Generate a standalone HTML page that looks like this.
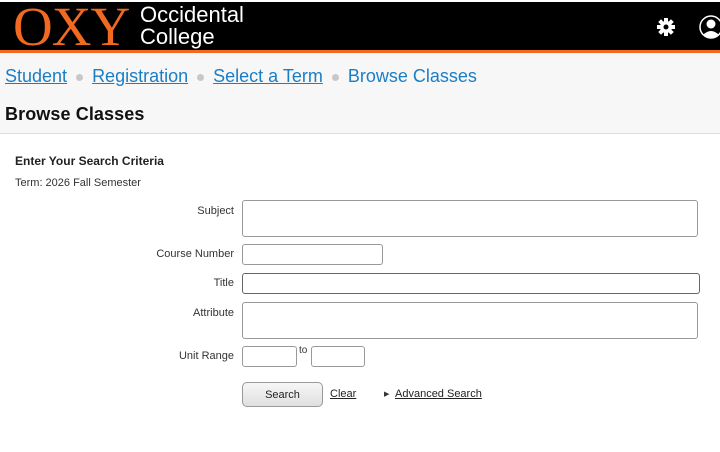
<!DOCTYPE html>
<html><head><style>
body{margin:0;width:720px;height:452px;overflow:hidden;background:#fff;font-family:"Liberation Sans",sans-serif;position:relative}
.hdr{position:absolute;top:2px;left:0;width:720px;height:48px;background:#000}
.org{position:absolute;top:50px;left:0;width:720px;height:3px;background:#f26a21}
.oxy{position:absolute;left:13px;top:-7px;font-family:"Liberation Serif",serif;font-size:55px;color:#f26a21;letter-spacing:-1px}
.occ{position:absolute;left:140px;top:2px;color:#fff;font-size:22px;line-height:22px}
.crumb{position:absolute;top:53px;left:0;width:720px;height:80px;background:#f7f7f7;border-bottom:1px solid #ddd}
.bc{position:absolute;left:5px;top:13px;font-size:18px;color:#1a7ec5;white-space:nowrap}
.bc a{color:#1a7ec5;text-decoration:underline}
.dot{display:inline-block;width:7px;height:7px;border-radius:50%;background:#c8c8c8;margin:0 9px;vertical-align:middle}
.h1{position:absolute;left:5px;top:51px;font-size:18px;color:#111;font-weight:bold;letter-spacing:0.1px}
.l{position:absolute;font-size:11px;color:#333;text-align:right;width:100px;left:134px}
.in{position:absolute;border:1px solid #999;border-radius:3px;background:#fff;box-sizing:border-box}
</style></head><body>
<div class="hdr">
<div class="oxy">OXY</div>
<div class="occ">Occidental<br>College</div>
<svg style="position:absolute;left:656px;top:15px" width="20" height="20" viewBox="0 0 20 20"><g fill="#fff"><circle cx="10" cy="10" r="6"/><rect x="8" y="1" width="4" height="18"/><rect x="1" y="8" width="18" height="4"/><rect x="8" y="1" width="4" height="18" transform="rotate(45 10 10)"/><rect x="8" y="1" width="4" height="18" transform="rotate(-45 10 10)"/></g><circle cx="10" cy="10" r="2.5" fill="#000"/></svg>
<svg style="position:absolute;left:699px;top:12px" width="24" height="26" viewBox="0 0 24 26"><circle cx="12" cy="13" r="11" fill="#000" stroke="#fff" stroke-width="1.5"/><circle cx="12" cy="10" r="4.5" fill="#fff"/><path d="M4 21 Q12 13 20 21 Q12 26 4 21Z" fill="#fff"/></svg>
</div>
<div class="org"></div>
<div class="crumb">
<div class="bc"><a>Student</a><span class="dot"></span><a>Registration</a><span class="dot"></span><a>Select a Term</a><span class="dot"></span>Browse Classes</div>
<div class="h1">Browse Classes</div>
</div>
<div style="position:absolute;left:15px;top:154px;font-size:12px;font-weight:bold;color:#222">Enter Your Search Criteria</div>
<div style="position:absolute;left:15px;top:177px;font-size:11px;color:#333">Term: 2026 Fall Semester</div>
<div class="l" style="top:205px">Subject</div><div class="in" style="left:242px;top:200px;width:456px;height:37px"></div>
<div class="l" style="top:248px">Course Number</div><div class="in" style="left:242px;top:244px;width:141px;height:21px"></div>
<div class="l" style="top:277px">Title</div><div class="in" style="left:242px;top:273px;width:458px;height:21px;border-color:#666"></div>
<div class="l" style="top:307px">Attribute</div><div class="in" style="left:242px;top:302px;width:456px;height:37px"></div>
<div class="l" style="top:350px">Unit Range</div><div class="in" style="left:242px;top:346px;width:55px;height:21px"></div>
<div style="position:absolute;left:299px;top:345px;font-size:10px;color:#333">to</div>
<div class="in" style="left:311px;top:346px;width:54px;height:21px"></div>
<div class="in" style="left:242px;top:382px;width:81px;height:25px;border-radius:5px;background:linear-gradient(#f7f7f7,#e0e0e0);font-size:11px;color:#222;text-align:center;line-height:24px">Search</div>
<div style="position:absolute;left:330px;top:388px;font-size:11px;color:#222;text-decoration:underline">Clear</div>
<div style="position:absolute;left:384px;top:390px;font-size:7px;color:#333">▶</div>
<div style="position:absolute;left:395px;top:388px;font-size:11px;color:#222;text-decoration:underline">Advanced Search</div>
</body></html>
